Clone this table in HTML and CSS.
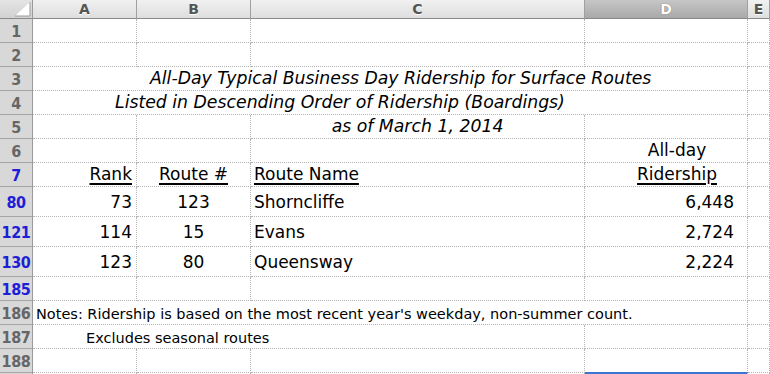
FILE: index.html
```html
<!DOCTYPE html>
<html>
<head>
<meta charset="utf-8">
<link rel="stylesheet" href="styles.css">
</head>
<body>
<div class="sheet">
  <div class="row hdr">
    <div class="corner"><svg width="32" height="18" viewBox="0 0 32 18"><polygon points="15,16 30,16 30,2" fill="#fff"/><polyline points="15,16 30,16 30,2" fill="none" stroke="#9a9a9a" stroke-width="1"/></svg></div>
    <div class="colh">A</div>
    <div class="colh">B</div>
    <div class="colh">C</div>
    <div class="colh sel">D</div>
    <div class="colh">E</div>
  </div>

  <div class="row">
    <div class="rh">1</div><div class="c"></div><div class="c"></div><div class="c"></div><div class="c"></div><div class="c"></div>
  </div>
  <div class="row">
    <div class="rh">2</div><div class="c"></div><div class="c"></div><div class="c"></div><div class="c"></div><div class="c"></div>
  </div>
  <div class="row">
    <div class="rh">3</div><div class="c span-ad title t1">All-Day Typical Business Day Ridership for Surface Routes</div><div class="c"></div>
  </div>
  <div class="row">
    <div class="rh">4</div><div class="c span-ad title t2">Listed in Descending Order of Ridership (Boardings)</div><div class="c"></div>
  </div>
  <div class="row">
    <div class="rh">5</div><div class="c"></div><div class="c"></div><div class="c title center">as of March 1, 2014</div><div class="c"></div><div class="c"></div>
  </div>
  <div class="row">
    <div class="rh">6</div><div class="c"></div><div class="c"></div><div class="c"></div><div class="c data center dh">All-day</div><div class="c"></div>
  </div>
  <div class="row">
    <div class="rh blue">7</div>
    <div class="c data right"><u>Rank</u></div>
    <div class="c data center"><u>Route #</u></div>
    <div class="c data left"><u>Route Name</u></div>
    <div class="c data center dh"><u>Ridership</u></div>
    <div class="c"></div>
  </div>
  <div class="row tall">
    <div class="rh blue">80</div>
    <div class="c data right">73</div>
    <div class="c data center">123</div>
    <div class="c data left">Shorncliffe</div>
    <div class="c data right num">6,448</div>
    <div class="c"></div>
  </div>
  <div class="row tall">
    <div class="rh blue">121</div>
    <div class="c data right">114</div>
    <div class="c data center">15</div>
    <div class="c data left">Evans</div>
    <div class="c data right num">2,724</div>
    <div class="c"></div>
  </div>
  <div class="row tall">
    <div class="rh blue">130</div>
    <div class="c data right">123</div>
    <div class="c data center">80</div>
    <div class="c data left">Queensway</div>
    <div class="c data right num">2,224</div>
    <div class="c"></div>
  </div>
  <div class="row">
    <div class="rh blue">185</div><div class="c"></div><div class="c"></div><div class="c"></div><div class="c"></div><div class="c"></div>
  </div>
  <div class="row">
    <div class="rh">186</div><div class="c span-ad note">Notes: Ridership is based on the most recent year's weekday, non-summer count.</div><div class="c"></div>
  </div>
  <div class="row">
    <div class="rh">187</div><div class="c span-ac note n2">Excludes seasonal routes</div><div class="c"></div><div class="c"></div>
  </div>
  <div class="row">
    <div class="rh">188</div><div class="c"></div><div class="c"></div><div class="c"></div><div class="c"></div><div class="c"></div>
  </div>
  <div class="row last">
    <div class="rh"></div><div class="c"></div><div class="c"></div><div class="c"></div><div class="c selcell"></div><div class="c"></div>
  </div>
</div>
</body>
</html>
```

FILE: styles.css
```css
html, body {
  margin: 0;
  padding: 0;
  background: #fff;
  overflow: hidden;
}
.sheet {
  width: 770px;
  height: 374px;
  overflow: hidden;
  font-family: "DejaVu Sans", "Liberation Sans", sans-serif;
  color: #000;
}
.row {
  display: grid;
  grid-template-columns: 33px 104px 114px 334px 163px 22px;
  height: 24px;
}
.row.tall { height: 30px; }
.row.last { height: 10px; }
.row.hdr { height: 19px; }

.corner {
  box-sizing: border-box;
  background: linear-gradient(#e4e4e4, #d2d2d2);
  border-right: 1px solid #9a9a9a;
  border-bottom: 1px solid #8a8a8a;
  line-height: 0;
}
.colh {
  box-sizing: border-box;
  background: linear-gradient(#f1f1f1, #dedede);
  border-right: 1px solid #a0a0a0;
  border-bottom: 1px solid #8a8a8a;
  font-weight: bold;
  font-size: 14px;
  color: #555;
  text-align: center;
  line-height: 18px;
  text-shadow: 0 1px 0 #fff;
}
.colh.sel {
  background: linear-gradient(#c6c6c6, #a9a9a9);
  color: #fff;
  text-shadow: 0 0 1px #555;
}
.rh {
  box-sizing: border-box;
  background: #d8d8d8;
  border-right: 1px solid #9a9a9a;
  border-bottom: 1px solid #a6a6a6;
  font-family: "DejaVu Sans Condensed", "DejaVu Sans", sans-serif;
  font-weight: bold;
  font-size: 16px;
  color: #666;
  text-align: center;
  display: flex;
  align-items: center;
  justify-content: center;
  letter-spacing: -0.4px;
  padding-top: 1px;
}
.rh.blue { color: #1f1fd6; }
.c {
  box-sizing: border-box;
  border-right: 1px dotted #b4b4b4;
  border-bottom: 1px dotted #b4b4b4;
  white-space: nowrap;
  display: flex;
  align-items: flex-end;
  padding-bottom: 2px;
  min-width: 0;
}
.span-ad { grid-column: 2 / 6; }
.span-ac { grid-column: 2 / 5; }
.title {
  font-style: italic;
  font-size: 17.3px;
}
.t1 { padding-left: 117px; }
.t2 { padding-left: 82px; }
.center { justify-content: center; }
.right { justify-content: flex-end; padding-right: 4px; }
.left { padding-left: 3px; }
.data { font-size: 17px; }
.dh { padding-left: 22px; }
.num { padding-right: 13px; }
.tall .c { padding-bottom: 4px; }
u { text-decoration-thickness: 1.5px; text-underline-offset: 3px; }
.note { font-size: 14.5px; padding-left: 3px; }
.n2 { padding-left: 53px; }
.selcell {
  border-top: 3px solid #3c76d2;
  border-bottom: none;
  margin-top: -1px;
}
```
